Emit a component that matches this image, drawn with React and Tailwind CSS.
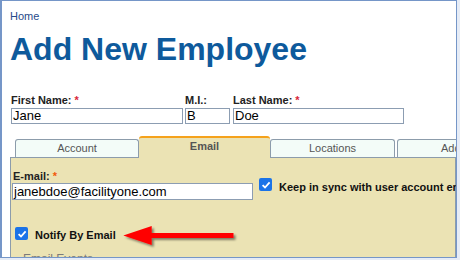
const FONT = "font-['Liberation_Sans',Arial,sans-serif]";

function Check() {
  return (
    <span className="flex h-[13px] w-[13px] shrink-0 items-center justify-center rounded-[2px] bg-[#1a73e8]">
      <svg width="10" height="10" viewBox="0 0 10 10">
        <path d="M1.6 5.2 L4 7.5 L8.6 2.3" fill="none" stroke="#fff" strokeWidth="1.8" />
      </svg>
    </span>
  );
}

function Field({ label, value, width, required, className = '' }) {
  return (
    <div className={className}>
      <div className="h-[13px] text-[11px] font-bold leading-[13px] text-[#222]">
        {label}
        {required && <span className="ml-[3px] text-[#d9263a]">*</span>}
      </div>
      <div
        className="mt-px h-[16px] border border-[#8c9db2] bg-white pl-[1px] text-[13px] leading-[14px] text-black"
        style={{ width }}
      >
        {value}
      </div>
    </div>
  );
}

function Tab({ label, width, active }) {
  if (active) {
    return (
      <div
        className="relative z-10 -mb-px flex h-[22px] shrink-0 items-center justify-center rounded-t-[3px] border-t-2 border-[#f5a21b] bg-[#ebe3b4] pb-[3px] text-[11px] font-bold text-[#555]"
        style={{ width }}
      >
        {label}
      </div>
    );
  }
  return (
    <div
      className="flex h-[18px] shrink-0 items-center justify-center overflow-hidden whitespace-nowrap rounded-t-[3px] border-x border-t border-[#8c9cab] bg-[#f3fcf8] text-[11px] text-[#555]"
      style={{ width }}
    >
      {label}
    </div>
  );
}

export default function App() {
  return (
    <div className={`h-[260px] w-[460px] overflow-hidden bg-[#e6ecf6] ${FONT}`}>
      <div className="relative h-[258px] w-[457px] overflow-hidden border-b border-l-2 border-r border-t border-[#7596c8] bg-white">
        <div className="pl-[8px] pt-[9px] text-[11px] leading-[13px] text-[#274a8a]">Home</div>
        <h1 className="ml-[8px] mt-[8px] text-[32px] font-bold leading-[36px] text-[#0e5a9c]">
          Add New Employee
        </h1>

        <div className="ml-[9px] mt-[27px] flex">
          <Field label="First Name:" value="Jane" width={172} required className="mr-[2px]" />
          <Field label="M.I.:" value="B" width={45} className="mr-[3px]" />
          <Field label="Last Name:" value="Doe" width={171} required />
        </div>

        <div className="ml-[13px] mt-[12px] flex items-end">
          <Tab label="Account" width={124} />
          <Tab label="Email" width={131} active />
          <Tab label="Locations" width={125} />
          <div className="ml-[2px] shrink-0">
            <Tab label="Addresses" width={140} />
          </div>
        </div>

        <div className="ml-[8px] h-[120px] border-x border-t border-[#8c9cab] bg-[#ebe3b4] pl-[1px] pt-[12px]">
          <div className="flex">
            <div>
              <div className="h-[13px] pl-px text-[11px] font-bold leading-[13px] text-[#222]">
                E-mail:<span className="ml-[3px] text-[#f25a0a]">*</span>
              </div>
              <div className="h-[17px] w-[241px] border border-[#8c9db2] bg-white pl-[1px] text-[13px] leading-[15px] text-black">
                janebdoe@facilityone.com
              </div>
            </div>
            <div className="ml-[6px] mt-[8px]">
              <Check />
            </div>
            <div className="ml-[7px] mt-[11px] whitespace-nowrap text-[11px] font-bold leading-[13px] text-[#111]">
              Keep in sync with user account email
            </div>
          </div>

          <div className="ml-[3px] mt-[27px] flex items-start">
            <Check />
            <span className="ml-[7px] mt-[2px] text-[11px] font-bold leading-[13px] text-[#111]">
              Notify By Email
            </span>
          </div>

          <div className="ml-[11px] mt-[10px] text-[12px] leading-[14px] text-[#7a7a7a]">Email Events</div>
        </div>

        <svg
          className="absolute left-[118px] top-[219px]"
          width="122"
          height="34"
          viewBox="0 0 122 34"
        >
          <defs>
            <filter id="sh" x="-10%" y="-30%" width="130%" height="180%">
              <feDropShadow dx="2" dy="2" stdDeviation="1.2" floodColor="#000" floodOpacity="0.45" />
            </filter>
          </defs>
          <polygon
            points="3.3,15.5 31.7,6 31.7,12.9 113.5,12.9 113.5,18.1 31.7,18.1 31.7,25"
            fill="#ff0000"
            filter="url(#sh)"
          />
        </svg>
      </div>
    </div>
  );
}
